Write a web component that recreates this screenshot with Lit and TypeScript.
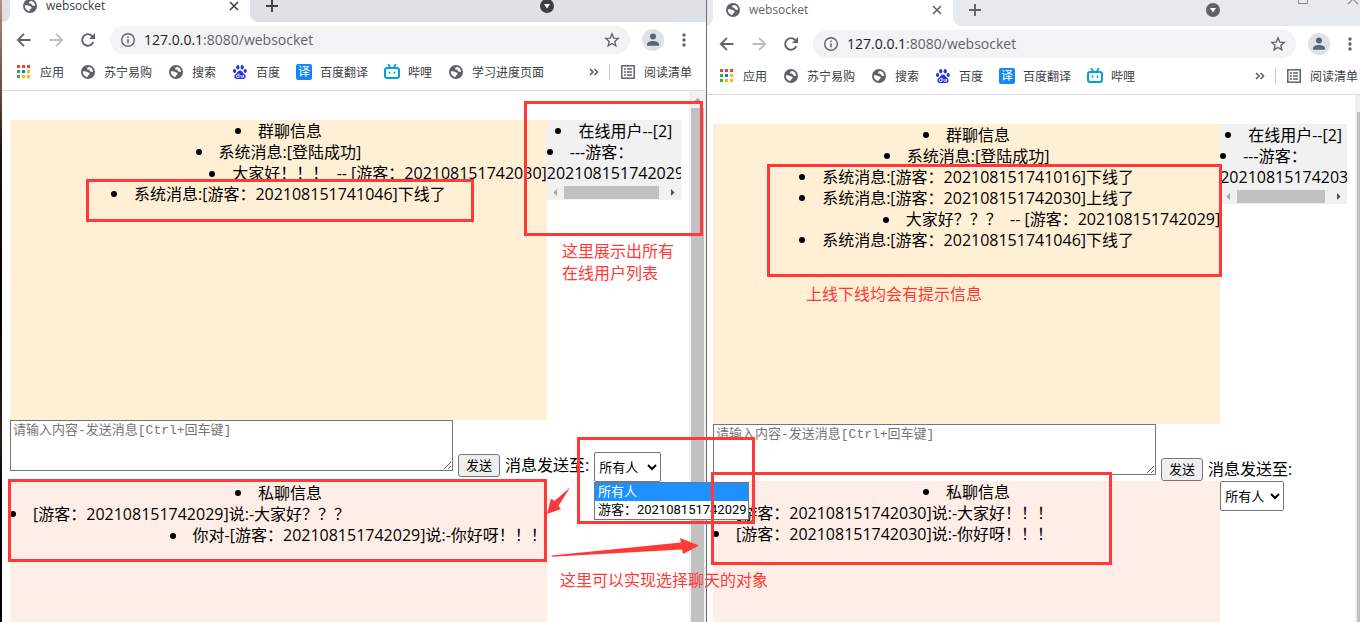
import { LitElement, html, svg, css, nothing } from "lit";
import { customElement, property } from "lit/decorators.js";
import { classMap } from "lit/directives/class-map.js";

type Align = "left" | "center" | "right";
interface Line { text: string; align: Align; }
interface Bookmark { icon: string; label: string; }

const globe = svg`<circle cx="8" cy="8" r="7" fill="#5f6368"/>
  <path d="M9.500 3c-2 .3-3 1.200-2.200 2.300.7.800 2.300.3 2.600 1.500.2 1 1.500 1.200 3.200.9-.1-2.200-1.400-4.200-3.600-4.700z" fill="#fff"/>
  <path d="M2.800 7.600c1.500-.7 3.400-.3 4.500.4 1.100.6 2.500.5 2.300 1.800-.2 1.200-1.400 1.200-1.700 2.200-.2.600-.5 1-1.100 1.100C4.400 12.400 2.800 10.400 2.800 7.600z" fill="#fff"/>`;

const icons: Record<string, unknown> = {
  globe,
  apps: svg`${[0, 1, 2].map((r) => [0, 1, 2].map((c) => svg`<rect x=${1 + c * 5} y=${1 + r * 5} width="3" height="3"
    fill=${[["#ea4335", "#ea4335", "#ea4335"], ["#34a853", "#1a73e8", "#fbbc04"], ["#34a853", "#fbbc04", "#fbbc04"]][r][c]}/>`))}`,
  paw: svg`<g fill="#2932e1"><ellipse cx="2.600" cy="7" rx="1.600" ry="2.100"/><ellipse cx="5.800" cy="3.300" rx="1.600" ry="2.200"/>
    <ellipse cx="10.200" cy="3.300" rx="1.600" ry="2.200"/><ellipse cx="13.200" cy="7" rx="1.600" ry="2.100"/>
    <path d="M8 6.500c1.700 0 2.400 1.800 3.700 3 1.600 1.400 2.500 2.700 1.600 4.300-1 1.800-3 1.100-5.300 1.100s-4.300.7-5.300-1.100c-.9-1.600 0-2.900 1.600-4.300C5.600 8.300 6.300 6.500 8 6.500z"/></g>
    <path d="M7 9.500v4H5.600a1.300 1.300 0 0 1 0-2.600H7M9 11v1.600c0 1.200 2.300 1.200 2.300 0V11v2.500" fill="none" stroke="#fff" stroke-width=".9"/>`,
  tv: svg`<path d="M4.500.8 6 3M11.500.8 10 3" stroke="#00a1d6" stroke-width="1.700" stroke-linecap="round"/>
    <rect x="1" y="4" width="14" height="10" rx="2.200" fill="#fff" stroke="#00a1d6" stroke-width="2"/>
    <path d="M5.500 7.500v2.200M10.500 7.500v2.200" stroke="#00a1d6" stroke-width="1.500"/>`,
  list: svg`<rect x="1.800" y="1.800" width="12.400" height="12.400" fill="none" stroke="#5f6368" stroke-width="1.500"/>
    <path d="M4 5h2M7 5h5M4 8h2M7 8h5M4 11h2M7 11h5" stroke="#5f6368" stroke-width="1.400"/>`,
  back: svg`<path d="M14.500 8H2M8 1.800 1.800 8 8 14.200" fill="none" stroke="#5f6368" stroke-width="1.800"/>`,
  forward: svg`<path d="M1.500 8H14M8 1.800 14.200 8 8 14.200" fill="none" stroke="#babcbe" stroke-width="1.800"/>`,
  reload: svg`<path d="M13.300 10.200A5.800 5.800 0 1 1 12.200 4.000" fill="none" stroke="#5f6368" stroke-width="1.900"/><path d="M15 1v6H9z" fill="#5f6368"/>`,
  info: svg`<circle cx="8" cy="8" r="6.300" fill="none" stroke="#5f6368" stroke-width="1.400"/><path d="M8 7.200v4M8 4.500v1.500" stroke="#5f6368" stroke-width="1.500"/>`,
  star: svg`<path d="m8 1.800 1.700 4.300 4.600.3-3.500 3 1.100 4.500L8 11.400l-3.900 2.500 1.100-4.500-3.500-3 4.600-.3z" fill="none" stroke="#5f6368" stroke-width="1.300"/>`,
  person: svg`<circle cx="8" cy="4.600" r="3" fill="#5a6478"/><path d="M2 13.800v-1.600C2 9.800 5.500 9 8 9s6 .8 6 3.200v1.600z" fill="#5a6478"/>`,
  more: svg`<g fill="#5f6368"><circle cx="8" cy="3" r="1.700"/><circle cx="8" cy="8" r="1.700"/><circle cx="8" cy="13" r="1.700"/></g>`,
  close: svg`<path d="m4 4 8 8M12 4l-8 8" stroke="currentColor" stroke-width="1.600"/>`,
  plus: svg`<path d="M8 2v12M2 8h12" stroke="currentColor" stroke-width="1.900"/>`,
  menu: svg`<circle cx="8" cy="8" r="7" fill="currentColor"/><path d="M5 6h6l-3 4.500z" fill="#fff"/>`,
  maximize: svg`<rect x="3.500" y="2.500" width="9" height="9" fill="none" stroke="#8a8d91"/>`,
  exit: svg`<path d="m3 2 10 10M13 2 3 12" stroke="#8a8d91" stroke-width="1.100"/>`,
  chevrons: svg`<path d="m4 5 3 3-3 3M8.500 5l3 3-3 3" fill="none" stroke="#5f6368" stroke-width="1.700"/>`,
};

const icon = (name: string) => html`<svg class="icon" viewBox="0 0 16 16" aria-hidden="true">${icons[name]}</svg>`;

@customElement("browser-window")
export class BrowserWindow extends LitElement {
  @property({ type: Boolean }) behind = false;
  @property({ attribute: false }) bookmarks: Bookmark[] = [];
  @property({ attribute: false }) group: Line[] = [];
  @property({ attribute: false }) secret: Line[] = [];
  @property() user = "";

  static styles = css`
    :host { display: flex; flex-direction: column; min-width: 0; background: #fff; color: #000;
      font: 16px/21px "Open Sans", "Noto Sans CJK SC", sans-serif; }
    * { box-sizing: border-box; }
    .icon { display: block; width: 16px; height: 16px; flex: none; }
    .bare { display: flex; align-items: center; justify-content: center; border: 0; padding: 0; background: none; color: inherit; }
    .strip { display: flex; height: 22px; flex: none; color: #3c4043; font-size: 12px; }
    .strip.tall { height: 26px; color: #5f6368; }
    .edge, .rest { background: #dee1e6; }
    .tall .edge, .tall .rest { background: #e7eaed; }
    .edge { width: 8px; border-bottom-right-radius: 8px; }
    .tab { display: flex; align-items: flex-end; width: 240px; padding: 0 8px 8px 12px; gap: 8px; }
    .tab .name { flex: 1; line-height: 16px; }
    .rest { flex: 1; display: flex; align-items: flex-end; padding: 0 151px 8px 14px; border-bottom-left-radius: 8px; }
    .rest .spacer { flex: 1; }
    .tall .rest { padding-right: 11px; }
    .system { display: flex; align-items: flex-end; gap: 34px; padding: 0 0 10px 74px; }
    .toolbar { display: flex; align-items: center; height: 36px; flex: none; padding: 0 14px 0 6px; gap: 12px; }
    .nav { display: flex; }
    .nav .bare { width: 32px; height: 28px; }
    .address { flex: 1; display: flex; align-items: center; height: 28px; margin-left: -6px; padding: 0 10px; gap: 8px;
      border-radius: 14px; background: #f1f3f4; font-size: 14px; line-height: 28px; color: #5f6368; min-width: 0; }
    .url { flex: 1; }
    .host { color: #202124; }
    .avatar { width: 22px; height: 22px; border-radius: 50%; background: #dee1e6; }
    .bookmarks { display: flex; align-items: center; height: 33px; flex: none; padding: 0 14px 4px; gap: 16px;
      border-bottom: 1px solid #dadce0; font-size: 12px; color: #3c4043; }
    .bookmark { display: flex; align-items: center; gap: 8px; color: inherit; text-decoration: none; white-space: nowrap; }
    .translate { width: 16px; height: 16px; border-radius: 2px; background: #1287f5; color: #fff; line-height: 16px; text-align: center; }
    .overflow { margin-left: auto; margin-right: -9px; }
    .divider { width: 1px; height: 16px; margin-right: -6px; background: #c8cacd; }
    .view { flex: 1; display: flex; min-height: 0; }
    .page { flex: 1; display: flex; flex-direction: column; min-width: 0; padding: 29px 8px 0; }
    .scroll { width: 17px; flex: none; display: flex; flex-direction: column; align-items: center; background: #f1f1f1; }
    .scroll .thumb { width: 13px; flex: 1; background: #c1c1c1; }
    .scroll svg { width: 17px; height: 17px; flex: none; }
    ul { margin: 0; padding: 1px 0 0; list-style: none; }
    li { white-space: nowrap; text-align: left; }
    li::before { content: ""; display: inline-block; width: 6px; height: 6px; margin-right: 17px; border-radius: 50%;
      background: #000; vertical-align: 3px; }
    li.center { text-align: center; }
    li.right { display: flex; align-items: center; justify-content: flex-end; }
    .top { display: flex; align-items: flex-start; }
    .group { width: 80%; min-height: 300px; background: #ffefd5; }
    .online { width: 20%; background: #f1f1f1; overflow: hidden; }
    .hbar { display: flex; align-items: center; height: 16px; }
    .hbar svg { width: 17px; height: 17px; flex: none; }
    .hbar .thumb { flex: 1; height: 13px; margin-right: 5px; background: #c1c1c1; }
    .composer { display: flex; align-items: flex-start; gap: 5px; }
    textarea { display: block; width: 443px; height: 51px; padding: 2px; border: 1px solid #767676; background: #fff;
      font: 13px/16px "Liberation Mono", "Noto Sans CJK SC", monospace; }
    textarea::placeholder { color: #757575; }
    .send { margin-top: 34px; width: 42px; height: 23px; padding: 0 0 1px; border: 1px solid #767676; border-radius: 3px;
      background: #efefef; font: 13px/20px "Noto Sans CJK SC", sans-serif; }
    .to { margin-top: 35px; white-space: nowrap; }
    select { width: 67px; height: 30px; padding: 0 0 2px; border: 1px solid #767676; border-radius: 2px; background: #fff;
      color: #000; font: 13px/20px "Noto Sans CJK SC", sans-serif; flex: none; }
    .composer select { margin-top: 32px; }
    .bottom { flex: 1; display: flex; align-items: flex-start; }
    .bottom select { width: 64px; }
    .secret { width: 80%; align-self: stretch; background: #ffeee7; }
  `;

  private lines(items: Line[]) {
    return items.map((l) => html`<li class=${l.align}>${l.text}</li>`);
  }

  private recipient() {
    return html`<select id="to"><option>所有人</option><option>游客：${this.user}</option></select>`;
  }

  render() {
    return html`
      <header class=${classMap({ strip: true, tall: this.behind })}>
        <div class="edge"></div>
        <div class="tab">${icon("globe")}<span class="name">websocket</span>
          <button class="bare" aria-label="关闭标签页">${icon("close")}</button></div>
        <div class="rest"><button class="bare" aria-label="新标签页">${icon("plus")}</button>
          <span class="spacer"></span>
          <button class="bare" aria-label="搜索标签页">${icon("menu")}</button>
          ${this.behind ? html`<div class="system">
            <button class="bare" aria-label="最大化">${icon("maximize")}</button>
            <button class="bare" aria-label="关闭">${icon("exit")}</button></div>` : nothing}
        </div>
      </header>
      <div class="toolbar">
        <div class="nav">
          <button class="bare" aria-label="后退">${icon("back")}</button>
          <button class="bare" aria-label="前进">${icon("forward")}</button>
          <button class="bare" aria-label="重新加载">${icon("reload")}</button>
        </div>
        <div class="address">${icon("info")}<span class="url"><span class="host">127.0.0.1</span>:8080/websocket</span>
          <button class="bare" aria-label="收藏">${icon("star")}</button></div>
        <button class="bare avatar" aria-label="用户">${icon("person")}</button>
        <button class="bare" aria-label="菜单">${icon("more")}</button>
      </div>
      <nav class="bookmarks">
        ${this.bookmarks.map((b) => html`<a class="bookmark" href="#">
          ${b.icon === "translate" ? html`<span class="translate">译</span>` : icon(b.icon)}<span>${b.label}</span></a>`)}
        <button class="bare overflow" aria-label="更多书签">${icon("chevrons")}</button>
        <span class="divider"></span>
        <a class="bookmark" href="#">${icon("list")}<span>阅读清单</span></a>
      </nav>
      <div class="view">
        <main class="page">
          <div class="top">
            <ul class="group"><li class="center">群聊信息</li>${this.lines(this.group)}</ul>
            <div class="online">
              <ul><li class="center">在线用户--[2]</li><li>---游客：<br />${this.user}</li></ul>
              <div class="hbar">
                <svg viewBox="0 0 17 17"><path d="M10 5v7L6.500 8.500z" fill="#a3a3a3"/></svg>
                <div class="thumb"></div>
                <svg viewBox="0 0 17 17"><path d="M7 5v7l3.500-3.500z" fill="#505050"/></svg>
              </div>
            </div>
          </div>
          <div class="composer">
            <textarea aria-label="消息" placeholder="请输入内容-发送消息[Ctrl+回车键]"></textarea>
            <button class="send">发送</button>
            <label class="to" for="to">消息发送至:</label>
            ${this.behind ? nothing : this.recipient()}
          </div>
          <div class="bottom">
            <ul class="secret"><li class="center">私聊信息</li>${this.lines(this.secret)}</ul>
            ${this.behind ? this.recipient() : nothing}
          </div>
        </main>
        <div class="scroll"><svg viewBox="0 0 17 17"><path d="M5 10.500h7L8.500 7z" fill="#a3a3a3"/></svg><div class="thumb"></div></div>
      </div>`;
  }
}

@customElement("app-root")
export class AppRoot extends LitElement {
  static styles = css`
    :host { display: block; position: relative; height: 100vh; overflow: hidden; background: #fff;
      font: 16px/22px "Noto Sans CJK SC", sans-serif; }
    * { box-sizing: border-box; }
    .desktop { display: grid; grid-template-columns: 2px 705fr 653fr; height: 100%; }
    .wallpaper { background: linear-gradient(#b98f83, #6a4438 15%, #14100e 25%, #000 50%, #2a211c 70%, #000 80%); }
    .front { z-index: 1; border-right: 1px solid #6b6b6b; }
    .rear { margin-left: -2px; margin-right: -12px; }
    .marks { position: absolute; inset: 0; z-index: 2; pointer-events: none; }
    .marks svg { position: absolute; left: 0; top: 0; }
    .frame { position: absolute; border: 3px solid #ff3838; }
    .note { position: absolute; color: #ff3838; white-space: nowrap; }
    .users { left: 524px; top: 101px; width: 179px; height: 135px; }
    .offline { left: 86px; top: 179px; width: 388px; height: 43px; }
    .notices { left: 767px; top: 164px; width: 455px; height: 113px; }
    .target { left: 577px; top: 437px; width: 178px; height: 87px; }
    .sent { left: 8px; top: 479px; width: 539px; height: 83px; }
    .received { left: 711px; top: 472px; width: 401px; height: 93px; }
    .note-users { left: 562px; top: 239px; }
    .note-notices { left: 806px; top: 282px; }
    .note-target { left: 560px; top: 568px; }
    .popup { position: absolute; left: 594px; top: 482px; width: 155px; margin: 0; padding: 0; list-style: none; z-index: 2;
      border: 1px solid #767676; background: #fff; font: 13px/18px Roboto, "Noto Sans CJK SC", sans-serif; white-space: nowrap; }
    .popup li { padding: 0 3px; height: 18px; }
    .popup .active { background: #1e90ff; color: #fff; }
  `;

  private bookmarks: Bookmark[] = [
    { icon: "apps", label: "应用" },
    { icon: "globe", label: "苏宁易购" },
    { icon: "globe", label: "搜索" },
    { icon: "paw", label: "百度" },
    { icon: "translate", label: "百度翻译" },
    { icon: "tv", label: "哔哩" },
    { icon: "globe", label: "学习进度页面" },
  ];

  private leftGroup: Line[] = [
    { text: "系统消息:[登陆成功]", align: "center" },
    { text: "大家好！！！\u00a0 -- [游客：202108151742030]", align: "right" },
    { text: "系统消息:[游客：202108151741046]下线了", align: "center" },
  ];
  private rightGroup: Line[] = [
    { text: "系统消息:[登陆成功]", align: "center" },
    { text: "系统消息:[游客：202108151741016]下线了", align: "center" },
    { text: "系统消息:[游客：202108151742030]上线了", align: "center" },
    { text: "大家好？？？\u00a0 -- [游客：202108151742029]", align: "right" },
    { text: "系统消息:[游客：202108151741046]下线了", align: "center" },
  ];
  private leftSecret: Line[] = [
    { text: "[游客：202108151742029]说:-大家好？？？", align: "left" },
    { text: "你对-[游客：202108151742029]说:-你好呀！！！", align: "right" },
  ];
  private rightSecret: Line[] = [
    { text: "[游客：202108151742030]说:-大家好！！！", align: "left" },
    { text: "[游客：202108151742030]说:-你好呀！！！", align: "left" },
  ];

  render() {
    return html`
      <div class="desktop">
        <div class="wallpaper"></div>
        <browser-window class="front" .bookmarks=${this.bookmarks} .group=${this.leftGroup}
          .secret=${this.leftSecret} user="202108151742029"></browser-window>
        <browser-window class="rear" behind .bookmarks=${this.bookmarks.slice(0, 6)} .group=${this.rightGroup}
          .secret=${this.rightSecret} user="202108151742030"></browser-window>
      </div>
      <ul class="popup" role="listbox" aria-label="消息发送至">
        <li class="active" role="option" aria-selected="true">所有人</li>
        <li role="option" aria-selected="false">游客：202108151742029</li>
      </ul>
      <div class="marks">
        <div class="frame users"></div>
        <div class="frame offline"></div>
        <div class="frame notices"></div>
        <div class="frame target"></div>
        <div class="frame sent"></div>
        <div class="frame received"></div>
        <div class="note note-users">这里展示出所有<br />在线用户列表</div>
        <div class="note note-notices">上线下线均会有提示信息</div>
        <div class="note note-target">这里可以实现选择聊天的对象</div>
        <svg width="1360" height="622" fill="#ff3838" aria-hidden="true">
          <path d="M570 487.500 558.500 506 561 509 547 514l4-15.500 3.500 2.500z"/>
          <path d="M551.500 555.500 681 542.500 680 538l19 7.500L683 554l-1-4.500-130 7.200z"/>
        </svg>
      </div>`;
  }
}
